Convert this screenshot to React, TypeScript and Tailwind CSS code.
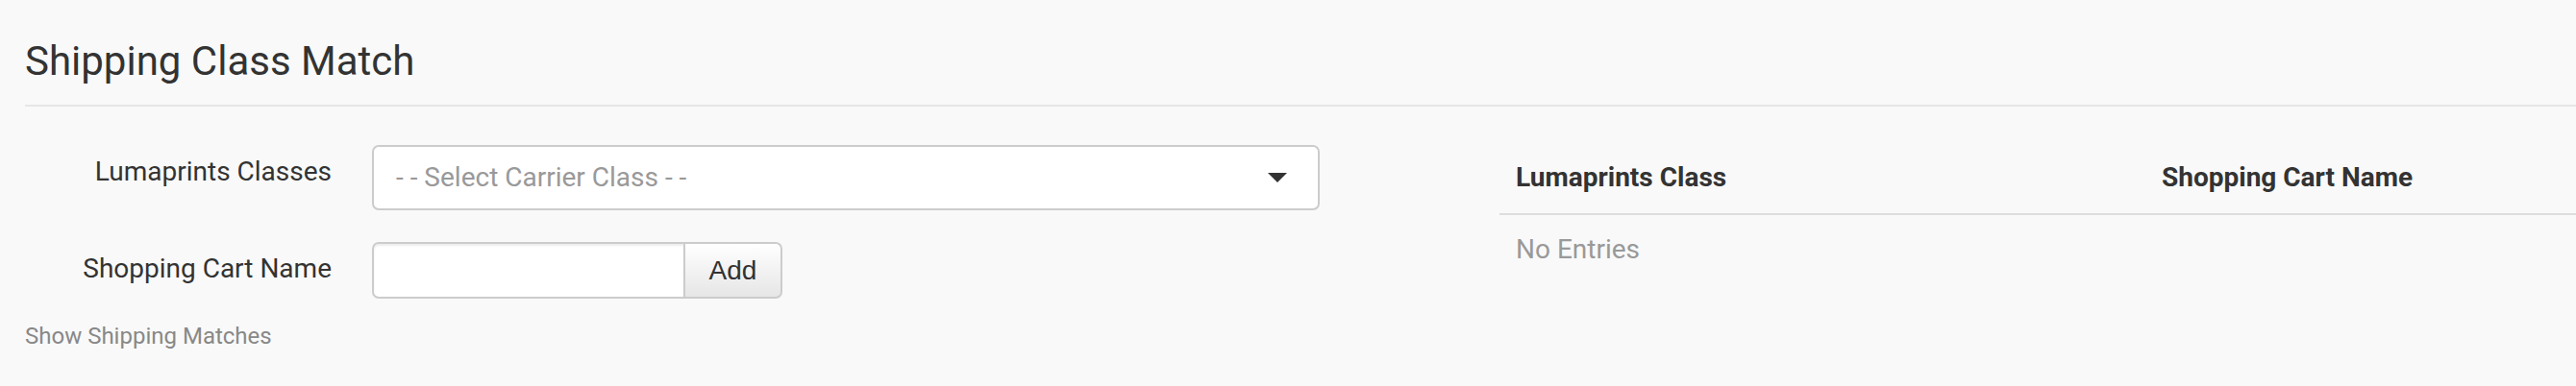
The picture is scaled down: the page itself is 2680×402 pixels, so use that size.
export default function App() {
  return (
    <div className="min-h-screen w-full bg-[#f9f9f9] font-['Roboto',sans-serif] text-[#333]">
      <div className="pl-[26px] pt-[40px]">
        <h1 className="text-[42px] leading-[48px] font-normal">Shipping Class Match</h1>
        <div className="mt-[21px] h-[2px] bg-[#e6e6e6]"></div>

        <div className="flex">
          {/* form */}
          <div className="w-[1347px] pt-[40px]">
            <div className="flex items-start">
              <label className="w-[319px] pt-[12px] text-right text-[28px] leading-[32px]">Lumaprints Classes</label>
              <div className="ml-[42px] flex h-[68px] w-[986px] items-center justify-between rounded-[7px] border-2 border-[#ccc] bg-white pl-[23px] pr-[32px]">
                <span className="text-[28px] leading-[32px] text-[#999]">- - Select Carrier Class - -</span>
                <svg width="20" height="10" viewBox="0 0 20 10">
                  <path d="M0 0 L20 0 L10 10 Z" fill="#333" />
                </svg>
              </div>
            </div>

            <div className="mt-[33px] flex items-start">
              <label className="w-[319px] pt-[12px] text-right text-[28px] leading-[32px]">Shopping Cart Name</label>
              <div className="ml-[42px] flex h-[59px]">
                <input
                  type="text"
                  className="h-full w-[326px] rounded-l-[7px] border-2 border-[#ccc] bg-white shadow-[inset_0_2px_2px_rgba(0,0,0,0.075)] outline-none"
                />
                <button className="-ml-[2px] h-full w-[103px] rounded-r-[7px] border-2 border-[#ccc] bg-gradient-to-b from-white to-[#e6e6e6] font-['Liberation_Sans',sans-serif] text-[28px] text-[#333]">
                  Add
                </button>
              </div>
            </div>

            <div className="mt-[25px] text-[24px] leading-[28px] text-[#888]">Show Shipping Matches</div>
          </div>

          {/* matches table */}
          <div className="ml-[187px] flex-1 pt-[58px]">
            <div className="flex border-b-2 border-[#ddd] pb-[21px] text-[28px] font-bold leading-[32px]">
              <div className="w-[60%] pl-[17px]">Lumaprints Class</div>
              <div className="w-[40%] pl-[17px]">Shopping Cart Name</div>
            </div>
            <div className="pl-[17px] pt-[20px] text-[28px] leading-[32px] text-[#999]">No Entries</div>
          </div>
        </div>
      </div>
    </div>
  );
}
